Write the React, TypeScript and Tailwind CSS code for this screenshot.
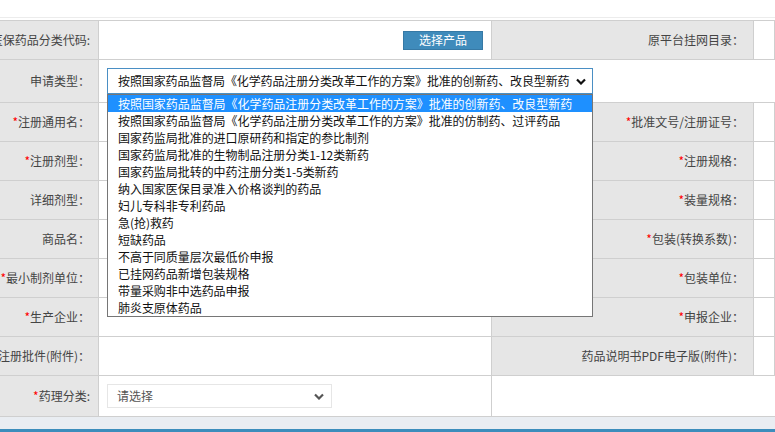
import React from 'react';

const options = [
  '按照国家药品监督局《化学药品注册分类改革工作的方案》批准的创新药、改良型新药',
  '按照国家药品监督局《化学药品注册分类改革工作的方案》批准的仿制药、过评药品',
  '国家药监局批准的进口原研药和指定的参比制剂',
  '国家药监局批准的生物制品注册分类1-12类新药',
  '国家药监局批转的中药注册分类1-5类新药',
  '纳入国家医保目录准入价格谈判的药品',
  '妇儿专科非专利药品',
  '急(抢)救药',
  '短缺药品',
  '不高于同质量层次最低价申报',
  '已挂网药品新增包装规格',
  '带量采购非中选药品申报',
  '肺炎支原体药品',
];

const Chevron = ({ className }: { className?: string }) => (
  <svg width="10" height="7" viewBox="0 0 10 7" className={className}>
    <path d="M1 1.5 L5 5.5 L9 1.5" fill="none" stroke="currentColor" strokeWidth="2.2" />
  </svg>
);

const Label = ({ text, req, right }: { text: string; req?: boolean; right?: boolean }) => (
  <div
    className={`flex items-center justify-end overflow-hidden whitespace-nowrap bg-[#e6e6e6] border-r border-[#cfcfcf] text-[12px] text-[#444] ${
      right ? 'pr-[9px]' : 'pr-2'
    }`}
  >
    {req && <span className="text-[#f00]">*</span>}
    {text}
  </div>
);

const Cell = ({ children }: { children?: React.ReactNode }) => (
  <div className="flex items-center border-r border-[#cfcfcf] bg-white">{children}</div>
);

const rows: [string, boolean, string, boolean][] = [
  ['注册通用名：', true, '批准文号/注册证号：', true],
  ['注册剂型：', true, '注册规格：', true],
  ['详细剂型：', false, '装量规格：', true],
  ['商品名：', false, '包装(转换系数)：', true],
  ['最小制剂单位：', true, '包装单位：', true],
  ['生产企业：', true, '申报企业：', true],
  ['注册批件(附件)：', true, '药品说明书PDF电子版(附件)：', false],
];

export default function App() {
  return (
    <div className="w-[775px] h-[432px] overflow-hidden bg-white font-['Noto_Sans_CJK_SC','Microsoft_YaHei',sans-serif]">
      <div className="h-[17px]" />
      <div className="h-[3px] border-t border-[#ececec]" />

      <div className="border-t border-[#cfcfcf]">
        {/* 医保药品分类代码 */}
        <div className="grid grid-cols-[99px_393px_262px_1fr] h-[39px] border-b border-[#cfcfcf]">
          <Label text="医保药品分类代码:" />
          <div className="flex items-center justify-end pr-2 border-r border-[#cfcfcf]">
            <button className="h-[19px] w-[80px] bg-[#3f8bbb] border border-[#3679a5] text-white text-[12px] leading-none">
              选择产品
            </button>
          </div>
          <Label text="原平台挂网目录：" right />
          <Cell />
        </div>

        {/* 申请类型 */}
        <div className="grid grid-cols-[99px_1fr] h-[43px] border-b border-[#cfcfcf]">
          <Label text="申请类型：" />
          <div className="flex items-center pl-2 bg-white">
            <div className="relative w-[486px]">
              <div className="h-[26px] border border-[#4a8fc4] flex items-center gap-[3px] pl-[10px] pr-[6px] text-[12px] text-[#111] whitespace-nowrap">
                <span className="flex-1 overflow-hidden tracking-[-0.12px]">{options[0]}</span>
                <Chevron className="text-[#111]" />
              </div>
              <div className="absolute left-0 top-full w-full z-10 bg-white border border-[#767676]">
                {options.map((o, i) => (
                  <div
                    key={o}
                    className={`h-[17px] leading-[17px] pl-[10px] text-[12px] tracking-[-0.05px] whitespace-nowrap overflow-hidden ${
                      i === 0 ? 'bg-[#1e90ff] text-white' : 'text-[#111]'
                    }`}
                  >
                    {o}
                  </div>
                ))}
              </div>
            </div>
          </div>
        </div>

        {rows.map(([l, lr, r, rr]) => (
          <div key={l} className="grid grid-cols-[99px_393px_262px_1fr] h-[39px] border-b border-[#cfcfcf]">
            <Label text={l} req={lr} />
            <Cell />
            <Label text={r} req={rr} right />
            <Cell />
          </div>
        ))}

        {/* 药理分类 */}
        <div className="grid grid-cols-[99px_393px_1fr] h-[41px] border-b border-[#cfcfcf]">
          <Label text="药理分类:" req />
          <div className="flex items-center pl-2 border-r border-[#cfcfcf]">
            <div className="h-[24px] w-[225px] border border-[#e6e6e6] flex items-center pl-[9px] pr-[7px] text-[12px] text-[#555]">
              <span className="flex-1">请选择</span>
              <Chevron className="text-[#555]" />
            </div>
          </div>
          <div className="bg-white" />
        </div>
      </div>

      <div className="h-[12px] bg-[#e9edf2]" />
      <div className="h-[3px] bg-[#3c8dbc]" />
    </div>
  );
}
